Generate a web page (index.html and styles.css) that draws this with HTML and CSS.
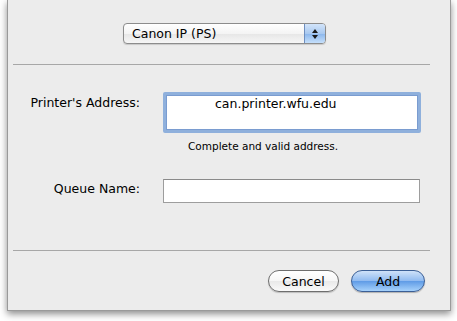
FILE: index.html
```html
<!DOCTYPE html>
<html>
<head>
<meta charset="utf-8">
<link rel="stylesheet" href="styles.css">
</head>
<body>
<div class="sheet">
  <div class="popup-row">
    <div class="popup">
      <span class="popup-text">Canon IP (PS)</span>
      <span class="stepper">
        <svg width="8" height="12" viewBox="0 0 8 12"><path d="M4 1 L7 5 L1 5 Z" fill="#1a1a1a"/><path d="M4 11 L7 7 L1 7 Z" fill="#1a1a1a"/></svg>
      </span>
    </div>
  </div>
  <div class="sep sep-top"></div>
  <div class="form">
    <div class="label label-addr">Printer's Address:</div>
    <div class="field field-addr">can.printer.wfu.edu</div>
    <div class="hint">Complete and valid address.</div>
    <div class="label label-queue">Queue Name:</div>
    <div class="field field-queue"></div>
  </div>
  <div class="sep sep-bottom"></div>
  <div class="buttons">
    <div class="btn btn-cancel">Cancel</div>
    <div class="btn btn-add">Add</div>
  </div>
</div>
</body>
</html>
```
FILE: styles.css
```css
html, body {
  margin: 0;
  padding: 0;
  background: #ffffff;
}
body {
  font-family: "DejaVu Sans", sans-serif;
  font-size: 12px;
  color: #000;
  width: 457px;
  height: 321px;
  overflow: hidden;
}
.sheet {
  box-sizing: border-box;
  margin-left: 7px;
  width: 444px;
  height: 311px;
  background: #ececec;
  border: 1px solid #9a9a9a;
  border-top: none;
  box-shadow: 0 3px 7px rgba(0,0,0,0.45);
  display: flex;
  flex-direction: column;
}
.popup-row {
  padding-top: 23px;
  padding-left: 115px;
}
.popup {
  box-sizing: border-box;
  width: 203px;
  height: 21px;
  border: 1px solid #8c8c8c;
  border-radius: 4px;
  background: linear-gradient(#ffffff, #f4f4f4 50%, #e6e6e6 51%, #f6f6f6);
  display: flex;
  align-items: center;
  box-shadow: 0 1px 1px rgba(0,0,0,0.15);
  overflow: hidden;
}
.popup-text {
  flex: 1;
  padding-left: 8px;
  font-size: 12.5px;
}
.stepper {
  width: 20px;
  height: 100%;
  border-left: 1px solid #6f8fbf;
  background: linear-gradient(#d2e4fa, #a9c9f0 50%, #8ab6ec 51%, #c6e0fb);
  display: flex;
  align-items: center;
  justify-content: center;
}
.sep {
  margin-left: 5px;
  width: 417px;
  height: 1px;
  background: #a7a7a7;
}
.sep-top {
  margin-top: 20px;
}
.form {
  display: grid;
  grid-template-columns: 155px 258px;
  padding-top: 27px;
}
.label {
  text-align: right;
  padding-right: 23px;
  font-size: 12.5px;
}
.label-addr {
  padding-top: 3px;
}
.field {
  box-sizing: border-box;
  background: #fff;
  border: 1px solid #9d9d9d;
  border-top-color: #8a8a8a;
}
.field-addr {
  height: 41px;
  border: 3px solid #8fb0dc;
  border-radius: 2px;
  box-shadow: inset 0 0 0 1px #7a9cd0;
  padding-left: 49px;
  padding-top: 1px;
  font-size: 12.5px;
}
.hint {
  grid-column: 2;
  padding-top: 7px;
  padding-left: 25px;
  font-size: 10.5px;
  height: 20px;
}
.label-queue {
  padding-top: 21px;
}
.field-queue {
  margin-top: 19px;
  height: 24px;
  width: 257px;
}
.sep-bottom {
  margin-top: 47px;
}
.buttons {
  display: flex;
  padding-top: 19px;
  padding-left: 260px;
  gap: 12px;
}
.btn {
  box-sizing: border-box;
  height: 22px;
  border-radius: 11px;
  display: flex;
  align-items: center;
  justify-content: center;
  font-size: 12.5px;
}
.btn-cancel {
  width: 71px;
  border: 1px solid #6e6e6e;
  background: linear-gradient(#ffffff, #f6f6f6 50%, #e9e9e9 51%, #fafafa);
  box-shadow: 0 1px 1px rgba(0,0,0,0.2);
}
.btn-add {
  width: 74px;
  border: 1px solid #3b5f96;
  background: linear-gradient(#cfe2f9, #8fbaf0 50%, #5f9be6 51%, #a6d1fb);
  box-shadow: 0 1px 1px rgba(0,0,0,0.25);
}
```
